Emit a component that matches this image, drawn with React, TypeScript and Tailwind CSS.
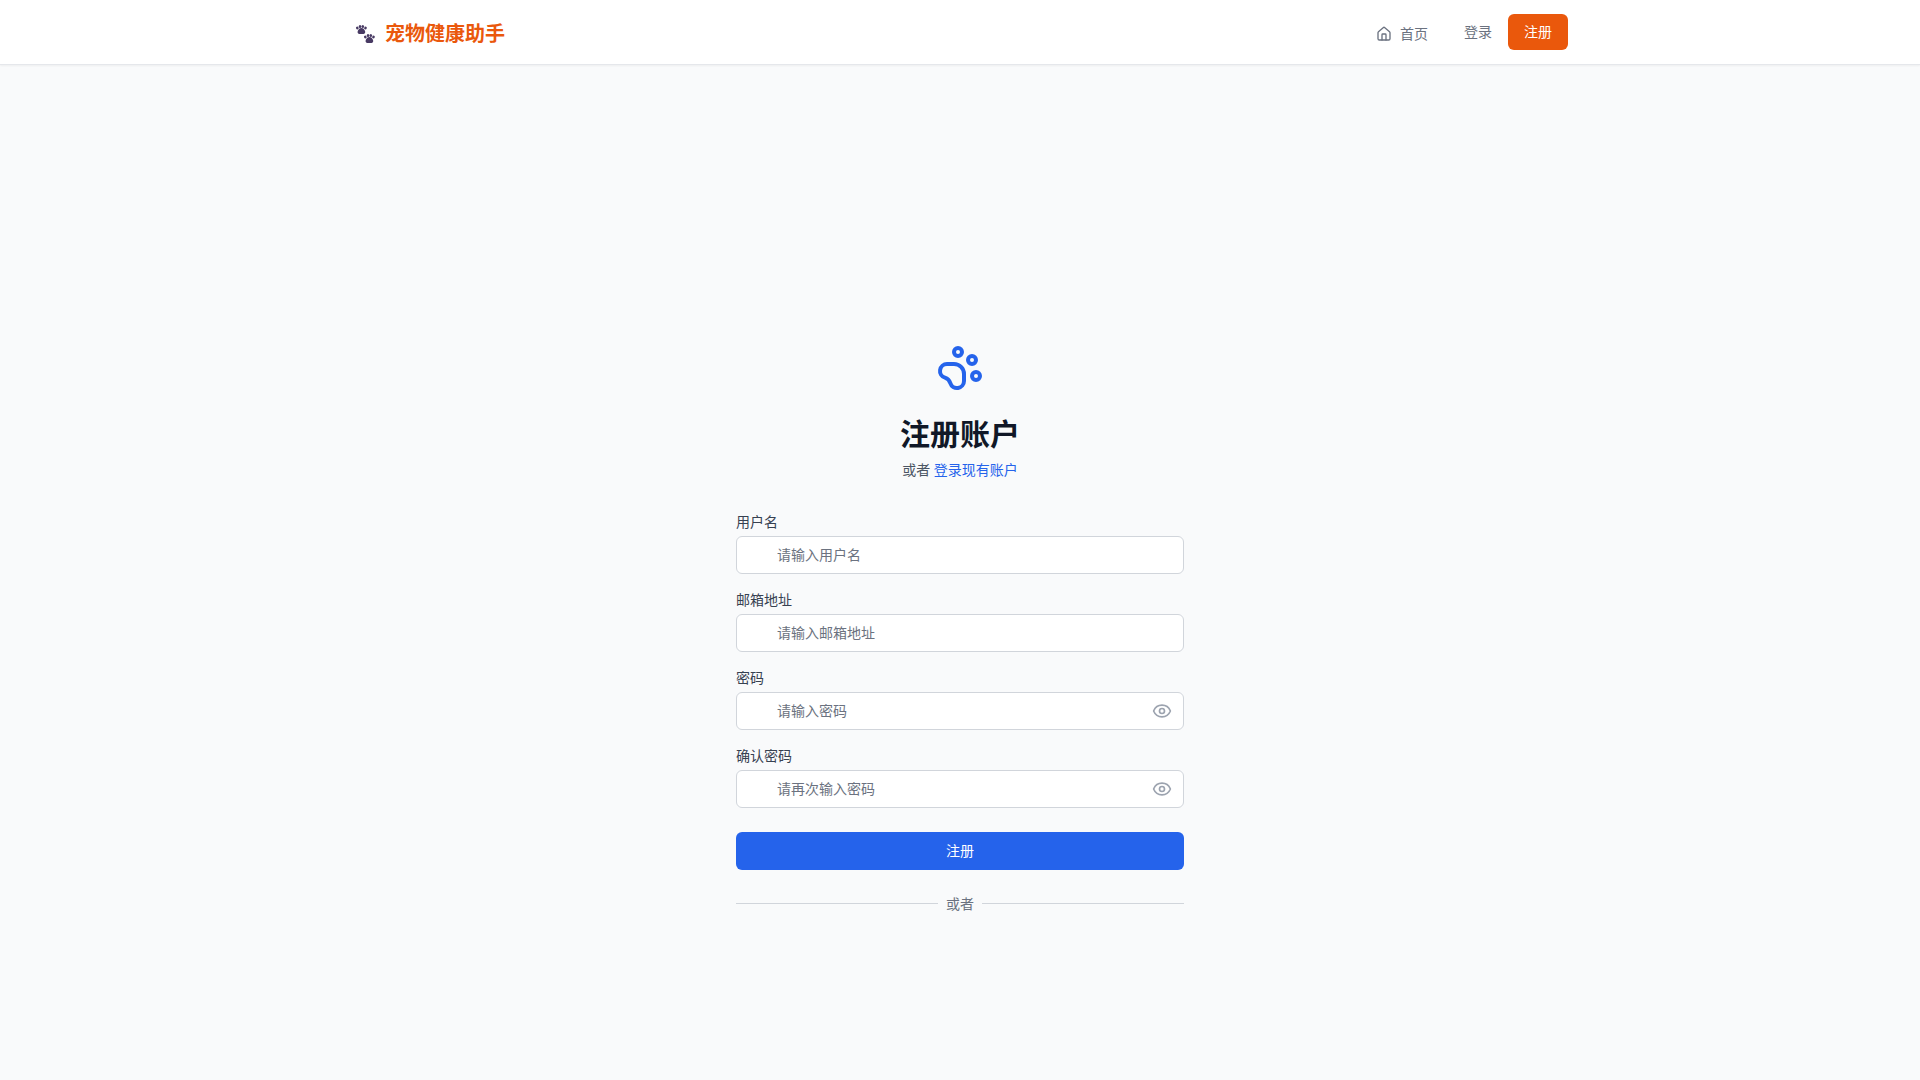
import { useState } from 'react';
import { Eye, House, PawPrint } from 'lucide-react';

const fields = [
  { id: 'username', label: '用户名', placeholder: '请输入用户名', type: 'text', secret: false },
  { id: 'email', label: '邮箱地址', placeholder: '请输入邮箱地址', type: 'email', secret: false },
  { id: 'password', label: '密码', placeholder: '请输入密码', type: 'password', secret: true },
  { id: 'confirm', label: '确认密码', placeholder: '请再次输入密码', type: 'password', secret: true },
];

function Field({ id, label, placeholder, type, secret }: (typeof fields)[number]) {
  const [shown, setShown] = useState(false);
  return (
    <div>
      <label htmlFor={id} className="block text-sm text-[#374151]">
        {label}
      </label>
      <div className="relative mt-1">
        <input
          id={id}
          type={shown ? 'text' : type}
          placeholder={placeholder}
          className="block w-full rounded-md border border-[#d1d5db] bg-white py-2 pr-10 pl-10 text-sm text-[#111827] placeholder:text-[#6b7280]"
        />
        {secret && (
          <button
            type="button"
            aria-label={shown ? '隐藏密码' : '显示密码'}
            onClick={() => setShown(!shown)}
            className="absolute inset-y-0 right-0 flex items-center pr-3 text-[#9ca3af]"
          >
            <Eye className="size-5" />
          </button>
        )}
      </div>
    </div>
  );
}

function Paws() {
  return (
    <svg viewBox="-2 0 24 24" className="size-6" fill="#483a63" aria-hidden="true">
      <g id="paw">
        <ellipse cx="3.300" cy="6" rx="1.300" ry="1.500" transform="rotate(-25 3.300 6)" />
        <ellipse cx="6" cy="4.500" rx="1.300" ry="1.600" />
        <ellipse cx="8.800" cy="4.500" rx="1.300" ry="1.600" />
        <ellipse cx="11.500" cy="6" rx="1.300" ry="1.500" transform="rotate(25 11.500 6)" />
        <path d="M7.400 6c-1.900 0-2.800 1.400-3.400 2.600-.7 1.400-.6 3.200 1.200 3.400h4.400c1.800-.2 1.900-2 1.200-3.400-.6-1.200-1.500-2.600-3.400-2.600z" />
      </g>
      <use href="#paw" x="8" y="9" />
    </svg>
  );
}

export default function App() {
  return (
    <div className="flex min-h-screen flex-col bg-[#f9fafb] font-['Noto_Sans','Noto_Sans_CJK_SC',sans-serif]">
      <header className="border-b border-[#e5e7eb] bg-white shadow-xs">
        <div className="mx-auto flex h-16 max-w-7xl items-center justify-between px-8">
          <a href="#" className="flex items-center gap-[9px] pt-1 text-xl font-bold text-[#ea580c]">
            <Paws />
            宠物健康助手
          </a>
          <nav className="flex items-center gap-4 text-sm text-[#6b7280]">
            <a href="#" className="mr-4 flex items-center gap-2 px-1 pt-1">
              <House className="size-4" />
              首页
            </a>
            <a href="#">登录</a>
            <a href="#" className="rounded-md bg-[#ea580c] px-4 py-2 text-white">
              注册
            </a>
          </nav>
        </div>
      </header>
      <main className="flex flex-1 items-center justify-center pt-28">
        <div className="w-full max-w-md">
          <PawPrint className="mx-auto size-12 text-[#2563eb]" />
          <h1 className="mt-6 text-center text-3xl font-bold text-[#111827]">注册账户</h1>
          <p className="mt-2 text-center text-sm text-[#4b5563]">
            或者{' '}
            <a href="#" className="text-[#2563eb]">
              登录现有账户
            </a>
          </p>
          <form className="mt-8">
            <div className="space-y-4">
              {fields.map((f) => (
                <Field key={f.id} {...f} />
              ))}
            </div>
            <button type="button" className="mt-6 w-full rounded-md border border-transparent bg-[#2563eb] py-2 text-sm text-white">
              注册
            </button>
          </form>
          <div className="mt-6 flex items-center gap-2 text-sm text-[#6b7280]">
            <span className="h-px flex-1 bg-[#d1d5db]" />
            或者
            <span className="h-px flex-1 bg-[#d1d5db]" />
          </div>
        </div>
      </main>
    </div>
  );
}
